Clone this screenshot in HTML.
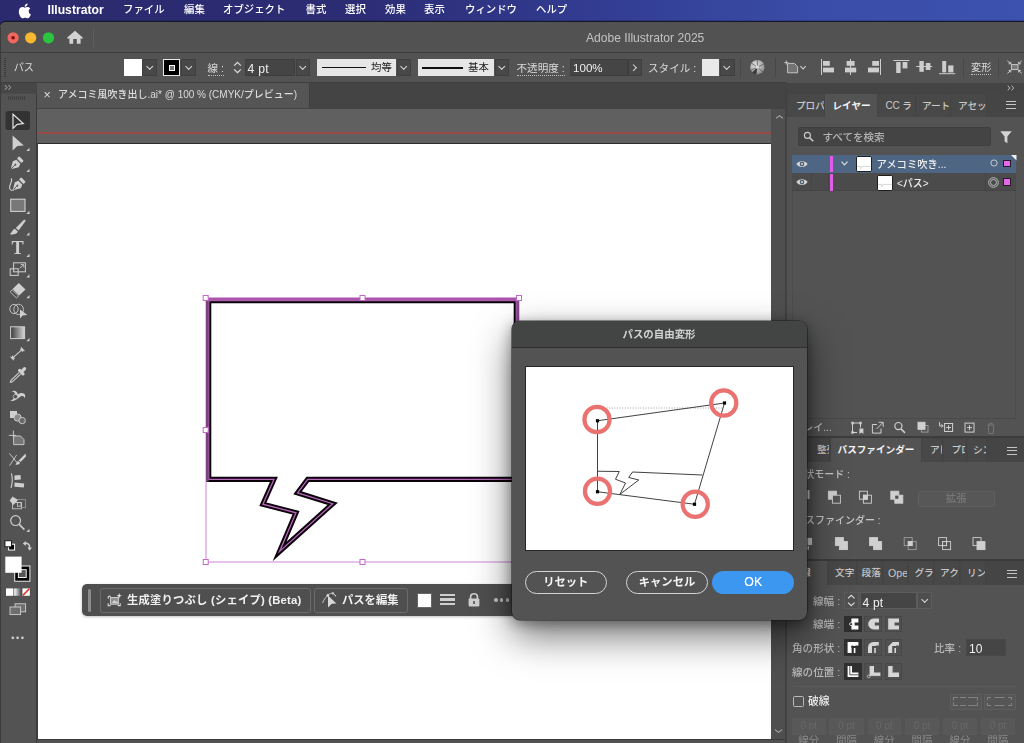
<!DOCTYPE html>
<html lang="ja">
<head>
<meta charset="utf-8">
<title>Adobe Illustrator 2025</title>
<style>
*{box-sizing:border-box;margin:0;padding:0}
html,body{width:1024px;height:743px;overflow:hidden;background:#535353}
.lbl,.t,.tab,#toolbar svg{will-change:opacity}
body{position:relative;font-family:"Liberation Sans","Noto Sans CJK JP",sans-serif;color:#e0e0e0;font-size:11px;line-height:1}
.abs{position:absolute}
.t{position:absolute;white-space:nowrap;line-height:1}
/* menubar */
#menubar{left:0;top:0;width:1024px;height:32px;background:linear-gradient(90deg,#2b2a6e 0%,#2c2c74 35%,#313a8e 55%,#3a4da8 80%,#3b52ae 100%)}
#menubar .t{color:#fff;font-size:10.4px;top:5px;font-weight:500}
/* window */
#win{left:0;top:22px;width:1024px;height:721px;background:#535353;border-top-left-radius:5.5px;overflow:hidden;box-shadow:0 -0.8px 0 0.4px #17172c}
#titlebar{left:0;top:0;width:1024px;height:31px;background:#525252;border-bottom:1px solid #3c3c3c}
#ctrl{left:0;top:31px;width:1024px;height:30px;background:#535353;border-bottom:1px solid #3e3e3e}
#tabbar{left:37px;top:61px;width:749px;height:25.5px;background:#444}
#doc-tab{left:0;top:0;width:273px;height:25.5px;background:#555555;border-right:1px solid #3e3e3e}
#toolbar{left:0;top:61px;width:37px;height:660px;background:#535353;border-right:1px solid #3a3a3a}
#paste{left:37px;top:86.5px;width:734px;height:635px;background:#606060}
#art{left:0;top:34px;width:734px;height:596.5px;background:#fff;border-top:1px solid #2e2e2e;border-left:1px solid #3c3c3c}
#bleed{left:0;top:23.6px;width:734px;height:1.8px;background:#9b4947}
#vscroll{left:771px;top:86.5px;width:15px;height:635px;background:#4f4f4f}
#dock{left:787px;top:60px;width:237px;height:661px;background:#535353}

/* generic */
.fld{position:absolute;background:#454545;border:1px solid #3d3d3d;border-radius:1px}
.dd{position:absolute;background:#484848;border:1px solid #3f3f3f}
.dd::after,.chev::after{content:"";position:absolute;left:50%;top:50%;width:4.4px;height:4.4px;margin:-3.6px 0 0 -2.6px;border-right:1.2px solid #d8d8d8;border-bottom:1.2px solid #d8d8d8;transform:rotate(45deg)}
.dd.r::after{transform:rotate(-45deg);margin:-2.6px 0 0 -3.8px}
.lbl{position:absolute;white-space:nowrap;line-height:1;color:#dadada;font-size:10.6px}
.dot-u{border-bottom:1px dotted #bdbdbd;padding-bottom:1px}
.vsep{position:absolute;width:1px;background:#474747}
svg{position:absolute;overflow:visible}

#dock .pg{position:absolute;left:-787px;top:-82px;width:1024px;height:743px}
.tabrow{position:absolute;left:787px;width:237px;background:#454545}
.tab{position:absolute;overflow:hidden;white-space:nowrap;font-size:9.6px;font-weight:500;color:#c9c9c9;background:#484848;line-height:1;border-right:1px solid #434343}
.tab.act{background:#535353;color:#f4f4f4;font-weight:700;border-right:none}
.ham{position:absolute;width:10px;height:8px;border-top:1.2px solid #c6c6c6;border-bottom:1.2px solid #c6c6c6}
.ham::after{content:"";position:absolute;left:0;top:2.1px;width:10px;height:1.2px;background:#c6c6c6}
.ibtn{position:absolute;width:17.5px;height:16.5px;border:1px solid #484848;background:#505050}
.ibtn.on{background:#2f2f2f;border-color:#2f2f2f}
</style>
</head>
<body>
<div id="menubar" class="abs">
  <svg style="left:17.5px;top:2.5px" width="13" height="15.5" viewBox="0 0 26 31"><path d="M21.4 16.4 c0-3.6 3-5.3 3.100-5.400 c-1.700-2.500-4.300-2.800-5.300-2.800 c-2.200-0.200-4.400 1.300-5.500 1.300 c-1.200 0-2.900-1.300-4.800-1.300 C6.400 8.300 4.100 9.700 2.800 11.900 c-2.600 4.600-0.700 11.300 1.900 15 c1.300 1.800 2.700 3.800 4.700 3.800 c1.900-0.100 2.600-1.200 4.900-1.200 c2.200 0 2.900 1.200 4.900 1.200 c2 0 3.300-1.800 4.500-3.700 c1.400-2.100 2-4.100 2-4.200 C25.700 22.700 21.400 21.100 21.400 16.400 Z M17.700 5.600 c1-1.200 1.700-3 1.500-4.700 c-1.500 0.100-3.300 1-4.300 2.200 c-0.900 1.100-1.800 2.800-1.500 4.500 C15 7.700 16.700 6.800 17.700 5.600 Z" fill="#fff"/></svg>

  <span class="t" style="left:47.5px;font-weight:bold;font-size:12.2px;top:4px">Illustrator</span>
  <span class="t" style="left:123px">ファイル</span>
  <span class="t" style="left:184px">編集</span>
  <span class="t" style="left:223px">オブジェクト</span>
  <span class="t" style="left:305.5px">書式</span>
  <span class="t" style="left:345px">選択</span>
  <span class="t" style="left:385px">効果</span>
  <span class="t" style="left:424px">表示</span>
  <span class="t" style="left:465px">ウィンドウ</span>
  <span class="t" style="left:536px">ヘルプ</span>
</div>
<div id="win" class="abs">
  <div id="titlebar" class="abs">
    <svg style="left:0;top:0" width="60" height="31" viewBox="0 22 60 31"><circle cx="13.1" cy="37.8" r="5.6" fill="#f1665f"/><circle cx="13.1" cy="37.8" r="1.8" fill="#7d0d0c"/><circle cx="30.7" cy="37.8" r="5.6" fill="#f8b830"/><circle cx="48.5" cy="37.8" r="5.6" fill="#2bc43e"/></svg>
    <svg style="left:66px;top:8.2px" width="18" height="14.8" viewBox="0 0 18 14" preserveAspectRatio="none"><path d="M9 0.6 L17 7.4 L15.9 8.6 L14.6 7.5 V13 H10.8 V8.6 H7.2 V13 H3.4 V7.5 L2.1 8.6 L1 7.4 Z" fill="#d2d2d2"/></svg>
    <div class="vsep" style="left:93px;top:6px;height:19px;background:#5d5d5d"></div>

    <span class="t" style="left:586px;top:9.8px;font-size:12.1px;color:#c2c2c2">Adobe Illustrator 2025</span>
  </div>
  <div id="ctrl" class="abs">
    <svg style="left:4px;top:5px" width="3" height="19" viewBox="0 0 3 19"><g fill="#3a3a3a"><rect x="0" y="0" width="2" height="1"/><rect x="0" y="2" width="2" height="1"/><rect x="0" y="4" width="2" height="1"/><rect x="0" y="6" width="2" height="1"/><rect x="0" y="8" width="2" height="1"/><rect x="0" y="10" width="2" height="1"/><rect x="0" y="12" width="2" height="1"/><rect x="0" y="14" width="2" height="1"/><rect x="0" y="16" width="2" height="1"/><rect x="0" y="18" width="2" height="1"/></g></svg>
    <span class="lbl" style="left:13.7px;top:10.3px;font-size:10.1px">パス</span>
    <div class="abs" style="left:124px;top:6px;width:17.5px;height:17px;background:#fff"></div>
    <div class="dd" style="left:142px;top:6px;width:15px;height:17px"></div>
    <div class="abs" style="left:163px;top:6px;width:17px;height:17px;background:#000;border:1px solid #e8e8e8"></div>
    <div class="abs" style="left:168.5px;top:11.5px;width:6px;height:6px;border:1.2px solid #fff;background:#777"></div>
    <div class="dd" style="left:181px;top:6px;width:15px;height:17px"></div>
    <span class="lbl dot-u" style="left:207.5px;top:10px">線 :</span>
    <svg style="left:231px;top:6px" width="13" height="17" viewBox="0 0 13 17"><path d="M3.2 6.6 L6.5 3.4 L9.8 6.6 M3.2 10.4 L6.5 13.6 L9.8 10.4" fill="none" stroke="#dcdcdc" stroke-width="1.3"/></svg>
    <div class="fld" style="left:245px;top:6px;width:50px;height:17px"></div>
    <span class="lbl" style="left:247.5px;top:10.2px;font-size:12.2px;letter-spacing:.25px;color:#efefef">4 pt</span>
    <div class="dd" style="left:295.5px;top:6px;width:14px;height:17px"></div>
    <div class="abs" style="left:317px;top:6px;width:78.5px;height:17px;background:#e6e6e6"></div>
    <div class="abs" style="left:322px;top:14.2px;width:44px;height:1.2px;background:#111"></div>
    <span class="lbl" style="left:371px;top:10.3px;color:#222;font-size:10.4px">均等</span>
    <div class="dd" style="left:396.5px;top:6px;width:14px;height:17px"></div>
    <div class="abs" style="left:417.5px;top:6px;width:76px;height:17px;background:#e6e6e6"></div>
    <div class="abs" style="left:422px;top:13.5px;width:41px;height:2.2px;background:#111"></div>
    <span class="lbl" style="left:468px;top:10.3px;color:#222;font-size:10.4px">基本</span>
    <div class="dd" style="left:494.5px;top:6px;width:14px;height:17px"></div>
    <span class="lbl dot-u" style="left:516.5px;top:10px">不透明度 :</span>
    <div class="fld" style="left:570px;top:6px;width:58px;height:17px"></div>
    <span class="lbl" style="left:573px;top:9.2px;font-size:11.6px;color:#efefef">100%</span>
    <div class="dd r" style="left:628px;top:6px;width:14px;height:17px"></div>
    <span class="lbl" style="left:648px;top:10px">スタイル :</span>
    <div class="abs" style="left:701.5px;top:6px;width:17px;height:17px;background:#e9e9e9"></div>
    <div class="dd" style="left:719.5px;top:6px;width:15px;height:17px"></div>
    <div class="vsep" style="left:740px;top:5px;height:19px"></div>
    <div class="vsep" style="left:775px;top:5px;height:19px"></div>
    <div class="vsep" style="left:963px;top:5px;height:19px"></div>
    <div class="vsep" style="left:998px;top:5px;height:19px"></div>
    <span class="lbl dot-u" style="left:971px;top:10px;font-size:10.2px">変形</span>
    <svg style="left:740px;top:0" width="284" height="29" viewBox="740 53 284 29">
      <defs><radialGradient id="glb" cx="0.4" cy="0.35" r="0.8"><stop offset="0" stop-color="#e2e2e2"/><stop offset="0.6" stop-color="#a8a8a8"/><stop offset="1" stop-color="#6c6c6c"/></radialGradient></defs>
      <circle cx="757.4" cy="67.2" r="7.2" fill="url(#glb)"/>
      <g stroke="#5a5a5a" stroke-width="0.8" fill="none"><path d="M757.4 67.2 L757.4 60 M757.4 67.2 L763.8 64 M757.4 67.2 L763 72 M757.4 67.2 L756 74.2 M757.4 67.2 L750.6 70.4 M757.4 67.2 L751.4 63"/></g>
      <path d="M757.4 67.2 L752 72.6 A7.2 7.2 0 0 0 756 74.3 Z" fill="#3a3a3a"/>
      <circle cx="757.4" cy="67.2" r="1.6" fill="#dedede"/>
      <g fill="none" stroke="#cdcdcd" stroke-width="0.9">
        <path d="M786.3 60.6 V64.6 M784.3 62.6 H788.3"/>
        <path d="M787.6 63.4 H794.4 L797.6 66.6 V72.8 H787.6 Z" fill="#747474"/>
        <path d="M800.4 66.2 L803.1 68.9 L805.8 66.2" stroke-width="1.1"/>
      </g>
      <g fill="#cdcdcd">
        <rect x="821" y="59" width="1" height="16"/><rect x="823" y="61" width="6.8" height="4.8"/><rect x="823" y="67.6" width="11" height="4.8"/>
        <rect x="850" y="59" width="1" height="16"/><rect x="846.6" y="61" width="8" height="4.8"/><rect x="845" y="67.6" width="11.2" height="4.8"/>
        <rect x="880" y="59" width="1" height="16"/><rect x="872.2" y="61" width="6.8" height="4.8"/><rect x="868" y="67.6" width="11" height="4.8"/>
        <rect x="893.4" y="60" width="16" height="1"/><rect x="896.2" y="62" width="4.4" height="11"/><rect x="902.6" y="62" width="4.8" height="6.4"/>
        <rect x="916.2" y="66" width="16" height="1"/><rect x="919.4" y="61" width="4.4" height="10.8"/><rect x="925.8" y="63" width="4.6" height="7"/>
        <rect x="939" y="73.2" width="16.2" height="1"/><rect x="942.2" y="61" width="4" height="11.4"/><rect x="948.2" y="65.4" width="5.2" height="7"/>
      </g>
      <rect x="1011.4" y="64.6" width="6.6" height="5" fill="#7a7a7a" stroke="#cdcdcd" stroke-width="0.9"/>
      <g fill="none" stroke="#cdcdcd" stroke-width="1"><path d="M1007.4 60.8 L1010.6 63.6 M1021.8 60.8 L1018.8 63.6 M1007.4 73.4 L1010.6 70.6 M1021.8 73.4 L1018.8 70.6"/><path d="M1008.6 63.8 H1010.8 V61.8 M1020.8 63.8 H1018.6 V61.8 M1008.6 70.4 H1010.8 V72.4 M1020.8 70.4 H1018.6 V72.4"/></g>
    </svg>

</div>
  <div id="tabbar" class="abs">
    <div class="abs" style="left:0;bottom:0;width:749px;height:1px;background:#434343;z-index:2"></div><div id="doc-tab" class="abs"><span class="lbl" style="left:6.5px;top:6px;font-size:12.5px;color:#dedede">×</span>
      <span class="lbl" style="left:21px;top:7.2px;font-size:10px;font-weight:500;color:#dcdcdc">アメコミ風吹き出し.ai* @ 100 % (CMYK/プレビュー)</span></div>
  </div>
  <div class="abs" style="left:0;top:5px;width:1px;height:716px;background:#3b3b3b;z-index:3"></div>
  <div id="toolbar" class="abs"><svg style="left:0;top:-1px" width="37" height="661" viewBox="0 82 37 661">
<rect x="0" y="83" width="37" height="10.5" fill="#474747"/>
<path d="M5 85.2 L7 87.5 L5 89.8 M8.6 85.2 L10.6 87.5 L8.6 89.8" fill="none" stroke="#bdbdbd" stroke-width="0.9"/>
<g fill="#3b3b3b"><rect x="8" y="96.5" width="1" height="3"/><rect x="10" y="96.5" width="1" height="3"/><rect x="12" y="96.5" width="1" height="3"/><rect x="14" y="96.5" width="1" height="3"/><rect x="16" y="96.5" width="1" height="3"/><rect x="18" y="96.5" width="1" height="3"/><rect x="20" y="96.5" width="1" height="3"/><rect x="22" y="96.5" width="1" height="3"/><rect x="24" y="96.5" width="1" height="3"/></g>
<!-- selection -->
<rect x="5.5" y="111" width="24.5" height="19" rx="2.5" fill="#333"/>
<path d="M13 114.3 L23.3 123.6 L17.2 124.4 L13 128.4 Z" fill="none" stroke="#e6e6e6" stroke-width="1.2" stroke-linejoin="miter"/>
<!-- direct selection -->
<path d="M12.6 135.6 L23.8 145.4 L17.4 146 L12.6 150.4 Z" fill="#cfcfcf"/>
<path d="M29.5 147.8 V151 H26.3 Z" fill="#cfcfcf"/>
<!-- pen -->
<g transform="translate(16.5,163.5) rotate(45)" fill="#cfcfcf"><path d="M0 8.2 L-4.2 1 L-2.8 -2.6 H2.8 L4.2 1 Z"/><rect x="-3.2" y="-7" width="6.4" height="3.2" rx="0.8"/><path d="M0 8.2 V2.4" stroke="#535353" stroke-width="0.9"/><circle cx="0" cy="1.6" r="1" fill="#535353"/></g>
<path d="M29.5 168.8 V172 H26.3 Z" fill="#cfcfcf"/>
<!-- curvature -->
<g transform="translate(18.5,184.5) rotate(45)" fill="#cfcfcf"><path d="M0 8.2 L-4.2 1 L-2.8 -2.6 H2.8 L4.2 1 Z"/><rect x="-3.2" y="-7" width="6.4" height="3.2" rx="0.8"/><path d="M0 8.2 V2.4" stroke="#535353" stroke-width="0.9"/><circle cx="0" cy="1.6" r="1" fill="#535353"/></g>
<path d="M11 178.5 C13.5 181 9 184 9.6 188 C10 190.6 12.5 190.8 14 189.6" fill="none" stroke="#cfcfcf" stroke-width="1.1"/>
<!-- rectangle -->
<rect x="10.7" y="199.2" width="14.3" height="12.2" fill="#787878" stroke="#cfcfcf" stroke-width="1.1"/>
<path d="M29.5 210.8 V214 H26.3 Z" fill="#cfcfcf"/>
<!-- brush -->
<path d="M24.2 219.4 L25.8 220.8 L18.6 230.4 L15.8 228 Z" fill="#cfcfcf"/>
<path d="M14.8 228.8 L17.8 231.4 C17 234.2 13 234.8 9.8 234.2 C12.2 232.8 12.2 229.6 14.8 228.8 Z" fill="#cfcfcf"/>
<path d="M29.5 232.3 V235.5 H26.3 Z" fill="#cfcfcf"/>
<!-- type -->
<text x="17.6" y="254.3" text-anchor="middle" font-family="Liberation Serif,serif" font-weight="bold" font-size="18.4" fill="#cfcfcf">T</text>
<path d="M29.5 253.8 V257 H26.3 Z" fill="#cfcfcf"/>
<!-- scale -->
<rect x="13.6" y="262.8" width="11.8" height="9" fill="none" stroke="#cfcfcf" stroke-width="1"/>
<rect x="10.2" y="268.8" width="8" height="6.6" fill="none" stroke="#cfcfcf" stroke-width="1"/>
<path d="M19.6 268.4 L23.4 265 M20.8 264.6 H23.8 V267.6" fill="none" stroke="#cfcfcf" stroke-width="0.9"/>
<path d="M29.5 274.3 V277.5 H26.3 Z" fill="#cfcfcf"/>
<!-- eraser -->
<path d="M18.8 283 L25.5 289.4 L19.2 295.4 L12.6 289 Z" fill="#cfcfcf"/>
<path d="M12.2 289.8 L18.6 296 L16.4 297.8 L10.2 291.8 Z" fill="#4a4a4a" stroke="#cfcfcf" stroke-width="0.9"/>
<path d="M29.5 295.1 V298.3 H26.3 Z" fill="#cfcfcf"/>
<!-- shape builder -->
<ellipse cx="14" cy="309" rx="4.2" ry="4.6" fill="none" stroke="#cfcfcf" stroke-width="0.9"/>
<ellipse cx="18.6" cy="309.4" rx="4.8" ry="5.2" fill="none" stroke="#cfcfcf" stroke-width="0.9"/>
<path d="M20 309.4 L27.4 315 L22.6 315.4 L20 318.4 Z" fill="#cfcfcf"/>
<!-- gradient -->
<defs><linearGradient id="gg" x1="0" x2="1" y1="0" y2="0"><stop offset="0" stop-color="#3a3a3a"/><stop offset="1" stop-color="#d8d8d8"/></linearGradient>
<linearGradient id="gg2" x1="0" x2="1" y1="0" y2="0"><stop offset="0" stop-color="#fff"/><stop offset="1" stop-color="#444"/></linearGradient></defs>
<rect x="10.6" y="326.8" width="14" height="11.8" fill="url(#gg)" stroke="#cfcfcf" stroke-width="1"/>
<path d="M29.5 338.0 V341.2 H26.3 Z" fill="#cfcfcf"/>
<!-- measure -->
<path d="M12.4 358.2 L22.6 349.2 M10.6 356.6 L13.8 360.2 M21 347.4 L24.4 351.2 M12.6 355.6 L12.4 358.2 L15 358.2 M20 349.2 L22.6 349.2 L22.4 351.8" fill="none" stroke="#cfcfcf" stroke-width="1.1"/>
<!-- eyedropper -->
<path d="M19.6 370.4 L23 373.8 M21.2 372.2 L24.6 368.6" stroke="#cfcfcf" stroke-width="3.2" stroke-linecap="round"/>
<path d="M19 372.6 L11 380.4 L10.4 382.2 L12.4 381.8 L20.6 374.2" fill="none" stroke="#cfcfcf" stroke-width="1.1"/>
<!-- width/warp -->
<path d="M10.4 401 C13 399.4 15.4 397.6 15.2 394.6 C15 392.4 13 391.4 11.6 391.6 C14 389.6 17.6 391.2 17.8 394.4 C19.2 393 22.4 392.4 24 393.6 C25.6 394.8 25.4 397.4 24.8 398.4 C24.4 396.4 22.6 395.6 20.6 396.4 C18.4 397.4 17.6 399.4 14.4 400.4 C12.8 400.9 11.4 401.2 10.4 401 Z" fill="#cfcfcf"/>
<circle cx="15.4" cy="396.6" r="2.2" fill="#535353" stroke="#cfcfcf" stroke-width="0.7"/>
<!-- blend -->
<rect x="10" y="411" width="7" height="7" fill="#cfcfcf"/>
<circle cx="17.6" cy="417.6" r="3.6" fill="#8a8a8a" stroke="#cfcfcf" stroke-width="0.9"/>
<circle cx="22.2" cy="420.6" r="3.2" fill="#6a6a6a" stroke="#cfcfcf" stroke-width="0.9"/>
<!-- artboard -->
<path d="M13.4 430.6 V438 M8.8 435.4 H16" stroke="#cfcfcf" stroke-width="0.9" fill="none"/>
<path d="M13.6 436 H20.6 L24 439.6 V444.6 H13.6 Z" fill="#767676" stroke="#cfcfcf" stroke-width="0.9"/>
<!-- slice -->
<path d="M9.4 453.4 L17 462.6 M9.6 465.6 L16.6 455" stroke="#cfcfcf" stroke-width="0.9" fill="none"/>
<path d="M25.6 453.6 L26 456.6 L20.6 462 L18.6 460.4 Z" fill="#cfcfcf"/>
<path d="M18 461 L20 462.8 C19.4 464.8 17 465 15.4 464.4 C16.6 463.6 16.6 461.6 18 461 Z" fill="#cfcfcf"/>
<!-- align/perspective -->
<path d="M11.4 473.4 C12.6 478 12.6 483 11 488" fill="none" stroke="#cfcfcf" stroke-width="1.1"/>
<path d="M14.4 475.6 L20.6 475 L20.8 479.6 L14.6 480 Z M14.6 482.6 L24.2 483.4 L23.8 487.6 L14.4 486.8 Z" fill="#cfcfcf"/>
<!-- live paint -->
<rect x="16.4" y="499.6" width="9" height="8" fill="none" stroke="#9a9a9a" stroke-width="0.8"/>
<rect x="12.4" y="502.4" width="9" height="6.4" fill="#535353" stroke="#cfcfcf" stroke-width="0.8"/>
<rect x="17.4" y="502.6" width="3.6" height="3.6" fill="none" stroke="#cfcfcf" stroke-width="0.8"/>
<path d="M12.6 496.6 L18 500 L13.4 505 L9.6 500.6 Z" fill="#cfcfcf"/>
<!-- zoom -->
<circle cx="15.6" cy="520.6" r="4.9" fill="none" stroke="#cfcfcf" stroke-width="1.2"/>
<path d="M19.2 524.4 L24.4 529.6" stroke="#cfcfcf" stroke-width="1.5"/>
<path d="M29.5 528.8 V532 H26.3 Z" fill="#cfcfcf"/>
<!-- default fill/stroke -->
<rect x="8.6" y="544.2" width="6" height="5.8" fill="#000" stroke="#fff" stroke-width="1"/>
<rect x="5" y="540.8" width="6.4" height="6" fill="#fff" stroke="#000" stroke-width="0.8"/>
<path d="M24.6 543.4 C27.6 542.6 30 544.6 29.6 548" fill="none" stroke="#cfcfcf" stroke-width="1.5"/>
<path d="M22.8 543.6 L25.8 541 L25.8 546 Z M27.4 547.4 L32 547.4 L29.6 550.8 Z" fill="#cfcfcf"/>
<!-- stroke swatch -->
<rect x="14.7" y="566" width="15.2" height="15.2" fill="#000" stroke="#f0f0f0" stroke-width="1"/>
<rect x="18.4" y="569.7" width="7.8" height="7.8" fill="#555" stroke="#f0f0f0" stroke-width="1"/>
<!-- fill swatch -->
<rect x="5.3" y="556.6" width="16.3" height="16.2" fill="#fff"/>
<!-- color modes -->
<rect x="6" y="588.4" width="7.4" height="7.4" fill="#fff"/>
<rect x="14.2" y="588.4" width="7.4" height="7.4" fill="url(#gg2)"/>
<rect x="22.4" y="588.4" width="7.4" height="7.4" fill="#fff"/>
<path d="M22.8 595.4 L29.4 588.8" stroke="#e0302a" stroke-width="1.6"/>
<!-- screen mode -->
<rect x="15" y="603.8" width="10.6" height="8" fill="#6e6e6e" stroke="#cfcfcf" stroke-width="0.9"/>
<rect x="10" y="607" width="10.6" height="7.6" fill="#6e6e6e" stroke="#cfcfcf" stroke-width="0.9"/>
<!-- more -->
<circle cx="12.8" cy="637.8" r="1.35" fill="#cfcfcf"/><circle cx="17.6" cy="637.8" r="1.35" fill="#cfcfcf"/><circle cx="22.4" cy="637.8" r="1.35" fill="#cfcfcf"/>
</svg></div>
  <div id="paste" class="abs">
    <div id="bleed" class="abs"></div>
    <div id="art" class="abs"></div>
  </div>
  <div id="vscroll" class="abs"></div>
  <svg style="left:774.5px;top:92px" width="9" height="6" viewBox="0 0 9 6"><path d="M1 4.4 L4.5 1.6 L8 4.4" fill="none" stroke="#a9a9a9" stroke-width="1.1"/></svg>
  <svg style="left:773.5px;top:705.5px" width="9" height="6" viewBox="0 0 9 6"><path d="M1 1.6 L4.5 4.4 L8 1.6" fill="none" stroke="#a9a9a9" stroke-width="1.1"/></svg>
  <div class="abs" style="left:37px;top:716.5px;width:749px;height:4.5px;background:#515151;border-top:1px solid #3a3a3a"></div>

  <div id="dock" class="abs"><div class="pg">
  <div class="abs" style="left:785px;top:82px;width:2px;height:661px;background:#424242"></div>
  <div class="abs" style="left:787px;top:83px;width:237px;height:10.5px;background:#444"></div>
  <svg style="left:1007px;top:84.5px" width="8" height="6" viewBox="0 0 8 6"><path d="M0.8 0.6 L2.8 3 L0.8 5.4 M4.6 0.6 L6.6 3 L4.6 5.4" fill="none" stroke="#c4c4c4" stroke-width="0.9"/></svg>
  <div class="tabrow" style="top:93.5px;height:23.5px"></div>
  <div class="tab" style="left:788px;top:94px;width:36.5px;height:23px;padding:6.5px 0 0 8px">プロパティ</div>
  <div class="tab act" style="left:825px;top:93.5px;width:52px;height:24.0px;padding:7px 0 0 7.5px">レイヤー</div>
  <div class="tab" style="left:877.5px;top:94px;width:38.0px;height:23px;padding:7.2px 0 0 8px;font-size:10px;letter-spacing:-.2px">CC <span style="font-size:9.6px;letter-spacing:0">ラ</span></div>
  <div class="tab" style="left:916px;top:94px;width:34.5px;height:23px;padding:6.5px 0 0 6px">アートボード</div>
  <div class="tab" style="left:951px;top:94px;width:35.5px;height:23px;padding:6.5px 0 0 7px">アセット</div>
  <div class="ham" style="left:1006px;top:101px"></div>
  <!-- search -->
  <div class="abs" style="left:798px;top:127px;width:192.5px;height:19px;background:#444;border:1px solid #3f3f3f;border-radius:2px"></div>
  <svg style="left:802.5px;top:130.5px" width="12" height="12" viewBox="0 0 12 12"><circle cx="4.4" cy="4.4" r="3" fill="none" stroke="#cdcdcd" stroke-width="1.1"/><path d="M6.7 6.7 L10.2 10.2" stroke="#cdcdcd" stroke-width="1.5"/></svg>
  <span class="lbl" style="left:822.5px;top:131.5px;font-size:10.6px;font-weight:500;color:#b4b4b4">すべてを検索</span>
  <svg style="left:999.5px;top:130.5px" width="12" height="13" viewBox="0 0 12 13"><path d="M0.3 0.3 H11.7 L7.4 5.6 V12.2 L4.6 10.4 V5.6 Z" fill="#d4d4d4"/></svg>
  <!-- list area -->
  <div class="abs" style="left:792px;top:154.5px;width:224px;height:264px;border-left:1px solid #4c4c4c;border-right:1px solid #4c4c4c;border-bottom:1px solid #494949"></div>
  <div class="abs" style="left:792px;top:154.7px;width:224px;height:18px;background:#4e6683"></div>
  <div class="abs" style="left:792px;top:173.2px;width:224px;height:18px;background:#4b4b4b;border-bottom:1px solid #444"></div>
  <div class="abs" style="left:811px;top:173.2px;width:1px;height:18px;background:#454545"></div>
  <div class="abs" style="left:828px;top:173.2px;width:1px;height:18px;background:#454545"></div>
  <div class="abs" style="left:984.5px;top:173.2px;width:1px;height:18px;background:#454545"></div>
  <svg style="left:795.5px;top:159.5px" width="12" height="8" viewBox="0 0 12 8"><path d="M0.4 4 C2.6 0.2 9.4 0.2 11.6 4 C9.4 7.8 2.6 7.8 0.4 4 Z" fill="#d6d6d6"/><circle cx="6" cy="4" r="2.3" fill="#4b5a6c"/><circle cx="6" cy="4" r="1.1" fill="#d6d6d6"/></svg><svg style="left:795.5px;top:178px" width="12" height="8" viewBox="0 0 12 8"><path d="M0.4 4 C2.6 0.2 9.4 0.2 11.6 4 C9.4 7.8 2.6 7.8 0.4 4 Z" fill="#d6d6d6"/><circle cx="6" cy="4" r="2.3" fill="#4b5a6c"/><circle cx="6" cy="4" r="1.1" fill="#d6d6d6"/></svg>
  <div class="abs" style="left:830.3px;top:155.5px;width:3.2px;height:16.5px;background:#e05be6"></div>
  <div class="abs" style="left:830.3px;top:174px;width:3.2px;height:16.5px;background:#e05be6"></div>
  <svg style="left:841px;top:160.5px" width="7" height="5" viewBox="0 0 7 5"><path d="M0.5 0.7 L3.5 3.9 L6.5 0.7" fill="none" stroke="#dcdcdc" stroke-width="1.2"/></svg>
  <div class="abs" style="left:856px;top:155.8px;width:16.3px;height:16.3px;background:#fff;border:1px solid #1e1e1e;border-radius:1.8px"></div><svg style="left:857px;top:164px" width="14.3" height="6" viewBox="0 0 14.3 6"><path d="M0 2.4 H3.2 L3.8 3.8 L3.4 4.8 L5 2.4 H14.3" fill="none" stroke="#b9b9b9" stroke-width="0.6"/></svg>
  <span class="lbl" style="left:876.5px;top:160.2px;font-size:10.3px;font-weight:500;color:#ececec">アメコミ吹き...</span>
  <svg style="left:989.7px;top:159.4px" width="8" height="8" viewBox="0 0 8 8"><circle cx="4" cy="4" r="3.1" fill="none" stroke="#d2d2d2" stroke-width="0.9"/></svg>
  <div class="abs" style="left:1003px;top:159.8px;width:7.5px;height:7.5px;background:#e468ea;border:1px solid #2a1a2a"></div>
  <svg style="left:1010.5px;top:154.7px" width="5.5" height="5.5" viewBox="0 0 5.5 5.5"><path d="M0 0 H5.5 V5.5 Z" fill="#f0f0f0"/></svg>
  <div class="abs" style="left:876.6px;top:174.5px;width:16.2px;height:16.2px;background:#fff;border:1px solid #1e1e1e;border-radius:1.8px"></div><svg style="left:877.6px;top:182px" width="14.2" height="6" viewBox="0 0 14.2 6"><path d="M0 2.4 H3.2 L3.8 3.8 L3.4 4.8 L5 2.4 H14.2" fill="none" stroke="#b9b9b9" stroke-width="0.6"/></svg>
  <span class="lbl" style="left:897px;top:179.3px;font-size:10px;font-weight:500;color:#ececec">&lt;パス&gt;</span>
  <svg style="left:988.2px;top:176.6px" width="11" height="11" viewBox="0 0 11 11"><circle cx="5.5" cy="5.5" r="4.8" fill="none" stroke="#c8c8c8" stroke-width="0.9"/><circle cx="5.5" cy="5.5" r="3" fill="none" stroke="#c8c8c8" stroke-width="0.9"/></svg>
  <div class="abs" style="left:1003px;top:178.2px;width:7.5px;height:7.5px;background:#e468ea;border:1px solid #2a1a2a"></div>
  <!-- layers footer -->
  <span class="lbl" style="left:795px;top:422.5px;font-size:10px;font-weight:500;color:#c6c6c6">1 レイ...</span>
  <svg style="left:850px;top:419.5px" width="150" height="16" viewBox="850 419.5 150 16">
    <g fill="none" stroke="#d0d0d0" stroke-width="1">
      <path d="M852.5 422.5 H860.5 M852.5 432 H857 M852.5 422.5 V432 M860.5 422.5 V427"/>
      <path d="M851.3 421.3 h2.4 v2.4 h-2.4 Z M859.3 421.3 h2.4 v2.4 h-2.4 Z M851.3 430.8 h2.4 v2.4 h-2.4 Z" fill="#d0d0d0" stroke="none"/>
      <path d="M859.4 428 h4 v5.6 l-2 -1.6 l-2 1.6 Z" fill="#d0d0d0" stroke="none"/>
      <path d="M877 424 H872.4 V432.6 H881 V428 M876.6 428.4 L882.6 422.4 M878.6 421.8 H883.2 V426.4"/>
      <circle cx="898.4" cy="425.6" r="3.6" stroke-width="1.2"/><path d="M901 428.4 L905 432.4" stroke-width="1.5"/>
      <rect x="921.4" y="425" width="6.6" height="6.6" stroke="#9a9a9a"/><rect x="918" y="421.8" width="7" height="7" fill="#d0d0d0"/>
      <path d="M939.6 421.6 V425.4 H943 M941.4 423.8 L943.2 425.4 L941.4 427"/>
      <rect x="944.6" y="423" width="8" height="8"/><path d="M948.6 424.6 V429.4 M946.2 427 H951"/>
      <rect x="965" y="422.6" width="9" height="9"/><path d="M969.5 424.6 V429.6 M967 427.1 H972"/>
      <path d="M987.6 424.6 H994.4 M989.6 424.4 V422.8 H992.4 V424.4 M988.2 425 L988.8 433 H993.2 L993.8 425" stroke="#777"/>
    </g>
  </svg>
  <!-- pathfinder panel -->
  <div class="abs" style="left:787px;top:436px;width:237px;height:1.5px;background:#3c3c3c"></div>
  <div class="tabrow" style="top:437.5px;height:24.5px"></div>
  <div class="tab" style="left:788px;top:438.5px;width:20px;height:23.5px;padding:6.5px 0 0 8px">変形</div>
  <div class="tab" style="left:808.7px;top:438.5px;width:21.299999999999955px;height:23.5px;padding:6.5px 0 0 8.3px">整列</div>
  <div class="tab act" style="left:830.6px;top:438px;width:90.79999999999995px;height:24.5px;padding:7px 0 0 7px">パスファインダー</div>
  <div class="tab" style="left:922px;top:438.5px;width:21.299999999999955px;height:23.5px;padding:6.5px 0 0 8px">アピアランス</div>
  <div class="tab" style="left:944px;top:438.5px;width:20.6px;height:23.5px;padding:6.5px 0 0 7.5px;border-right:none">プロパティ</div><div class="tab" style="left:964.6px;top:438.5px;width:2.7px;height:23.5px"></div>
  <div class="tab" style="left:968px;top:438.5px;width:19px;height:23.5px;padding:6.5px 0 0 5px">シンボル</div>
  <div class="ham" style="left:1006.5px;top:446.5px"></div>
  <span class="lbl" style="left:794.2px;top:470px;font-size:10px;font-weight:500;color:#c6c6c6">形状モード :</span>
  <div class="abs" style="left:918px;top:491px;width:76.5px;height:15.5px;background:#575757;border:1px solid #5e5e5e;border-radius:2px"></div>
  <span class="lbl" style="left:918px;width:76.5px;text-align:center;top:493.5px;font-size:10.4px;color:#7e7e7e">拡張</span>
  <span class="lbl" style="left:795px;top:516px;font-size:10px;font-weight:500;color:#c6c6c6">パスファインダー :</span>
  <svg style="left:800px;top:488px" width="200" height="66" viewBox="800 488 200 66">
    <g stroke="#d0d0d0" stroke-width="0.9">
      <!-- shape modes -->
      <rect x="797" y="494.5" width="8" height="8" fill="#d0d0d0"/><rect x="801" y="490.5" width="8" height="8" fill="#d0d0d0"/>
      <rect x="828.4" y="491.2" width="8" height="8" fill="#d0d0d0"/><rect x="832.4" y="495.2" width="8" height="8" fill="#535353"/>
      <rect x="859.4" y="491.2" width="8" height="8" fill="none"/><rect x="863.4" y="495.2" width="8" height="8" fill="none"/><rect x="863.4" y="495.2" width="4" height="4" fill="#d0d0d0"/>
      <rect x="890.8" y="491.2" width="8" height="8" fill="#d0d0d0"/><rect x="894.8" y="495.2" width="8" height="8" fill="#d0d0d0"/><rect x="895.2" y="495.6" width="3.2" height="3.2" fill="#535353" stroke="none"/>
      <!-- pathfinders -->
      <rect x="800.4" y="541.4" width="8" height="8" fill="#d0d0d0"/><rect x="804.4" y="537.4" width="8" height="8" fill="#d0d0d0" stroke="#535353"/>
      <rect x="835.4" y="537.6" width="8" height="8" fill="#d0d0d0"/><rect x="839.4" y="541.6" width="8" height="8" fill="#d0d0d0"/>
      <rect x="869.6" y="537.6" width="8" height="8" fill="#d0d0d0"/><rect x="873.6" y="541.6" width="8" height="8" fill="#d0d0d0"/>
      <rect x="904.2" y="537.6" width="8" height="8" fill="none" stroke="#9c9c9c"/><rect x="908.2" y="541.6" width="8" height="8" fill="none" stroke="#9c9c9c"/><rect x="908.2" y="541.6" width="4" height="4" fill="#d0d0d0"/>
      <rect x="938.6" y="537.6" width="8" height="8" fill="none"/><rect x="942.6" y="541.6" width="8" height="8" fill="none"/><rect x="942.6" y="541.6" width="4" height="4" fill="none"/>
      <rect x="973" y="537.6" width="8" height="8" fill="none"/><rect x="977" y="541.6" width="8" height="8" fill="#d0d0d0"/>
    </g>
  </svg>

  <!-- stroke panel -->
  <div class="abs" style="left:787px;top:559px;width:237px;height:1.5px;background:#3c3c3c"></div>
  <div class="tabrow" style="top:560.5px;height:24.5px"></div>
  <div class="tab act" style="left:788px;top:561px;width:39px;height:24.5px;padding:7px 0 0 13px">線</div>
  <div class="tab" style="left:827.6px;top:561.5px;width:29.399999999999977px;height:23.5px;padding:6.5px 0 0 7.5px">文字</div>
  <div class="tab" style="left:857.6px;top:561.5px;width:25.399999999999977px;height:23.5px;padding:6.5px 0 0 4px">段落</div>
  <div class="tab" style="left:883.6px;top:561.5px;width:24.799999999999955px;height:23.5px;padding:6px 0 0 4.5px;font-size:10.6px">OpenType</div>
  <div class="tab" style="left:909px;top:561.5px;width:25px;height:23.5px;padding:6.5px 0 0 5.5px">グラフィック</div>
  <div class="tab" style="left:934.6px;top:561.5px;width:25.399999999999977px;height:23.5px;padding:6.5px 0 0 5.5px">アクション</div>
  <div class="tab" style="left:960.6px;top:561.5px;width:25.799999999999955px;height:23.5px;padding:6.5px 0 0 6.5px">リンク</div>
  <div class="ham" style="left:1006.5px;top:569.5px"></div>
  <span class="lbl" style="left:813px;top:596px;font-size:10.6px;font-weight:500;color:#b9b9b9">線幅 :</span>
  <div class="abs" style="left:844.2px;top:592px;width:14.5px;height:17px;border:1px solid #5c5c5c;background:#505050"></div>
  <svg style="left:844.2px;top:592px" width="14.5" height="17" viewBox="0 0 14.5 17"><path d="M4 6.4 L7.25 3.4 L10.5 6.4 M4 10.6 L7.25 13.6 L10.5 10.6" fill="none" stroke="#dcdcdc" stroke-width="1.2"/></svg>
  <div class="abs" style="left:860px;top:592px;width:56.5px;height:17px;border:1px solid #5c5c5c;background:#454545"></div>
  <span class="lbl" style="left:862.5px;top:597px;font-size:12px;letter-spacing:.2px;color:#f2f2f2">4 pt</span>
  <div class="dd" style="left:916.5px;top:592px;width:15.5px;height:17px;border-color:#5c5c5c;background:#4e4e4e"></div>
  <span class="lbl" style="left:813px;top:618.8px;font-size:10.6px;font-weight:500;color:#b9b9b9">線端 :</span>
  <div class="ibtn on" style="left:844.2px;top:615.5px"></div><div class="ibtn" style="left:864.4px;top:615.5px"></div><div class="ibtn" style="left:884.6px;top:615.5px"></div>
  <span class="lbl" style="left:792px;top:643px;font-size:10.6px;font-weight:500;color:#b9b9b9">角の形状 :</span>
  <div class="ibtn on" style="left:844.2px;top:639px"></div><div class="ibtn" style="left:864.4px;top:639px"></div><div class="ibtn" style="left:884.6px;top:639px"></div>
  <span class="lbl" style="left:934px;top:643px;font-size:10.6px;font-weight:500;color:#b9b9b9">比率 :</span>
  <div class="abs" style="left:965.5px;top:639px;width:40.5px;height:17px;border:1px solid #484848;background:#454545"></div>
  <span class="lbl" style="left:969px;top:643.2px;font-size:12px;color:#f2f2f2">10</span>
  <span class="lbl" style="left:792px;top:666.6px;font-size:10.6px;font-weight:500;color:#b9b9b9">線の位置 :</span>
  <div class="ibtn on" style="left:844.2px;top:663px"></div><div class="ibtn" style="left:864.4px;top:663px"></div><div class="ibtn" style="left:884.6px;top:663px"></div>
  <svg style="left:840px;top:612px" width="70" height="72" viewBox="840 612 70 72">
    <!-- caps -->
    <path d="M851.4 618.6 H858.4 V622.6 H854.6 V625.6 H858.4 V629.4 H851.4 Z" fill="#fff"/><circle cx="851" cy="624.1" r="1.5" fill="#2f2f2f" stroke="#fff" stroke-width="0.7"/>
    <path d="M873.6 618.6 H879 V622.6 H874.8 V625.6 H879 V629.4 H873.6 A5.4 5.4 0 0 1 873.6 618.6 Z" fill="#d6d6d6"/>
    <path d="M888.2 618.6 H899 V622.6 H894.6 V625.6 H899 V629.4 H888.2 Z" fill="#d6d6d6"/>
    <!-- corners -->
    <path d="M847.6 642 H858.4 V645.4 H855.4 V653 H847.6 Z" fill="#fff"/><path d="M851.6 646 H858.4 V648 H853.8 V653 H851.6 Z" fill="#2f2f2f"/><circle cx="852.4" cy="646.8" r="1.2" fill="#2f2f2f"/>
    <path d="M878.8 642 V645.4 H875.8 V653 H868 V647.4 A5.4 5.4 0 0 1 873.4 642 Z" fill="#d6d6d6"/><path d="M872 646 H878.8 V648 H874.2 V653 H872 Z" fill="#505050"/>
    <path d="M899 642 V645.4 H896 V653 H888.2 V646.6 L892.8 642 Z" fill="#d6d6d6"/><path d="M892.2 646 H899 V648 H894.4 V653 H892.2 Z" fill="#505050"/>
    <!-- align -->
    <path d="M847.6 666 H852 V672.6 H858.4 V677 H847.6 Z" fill="#fff"/><path d="M849.8 666 V674.8 H858.4" fill="none" stroke="#2f2f2f" stroke-width="0.8"/>
    <path d="M869.6 666 H874 V672.6 H880.4 V675.4 H869.6 Z" fill="#d6d6d6"/><path d="M869.4 675.6 H880.4" stroke="#d6d6d6" stroke-width="0.8" fill="none"/><circle cx="868.8" cy="676.4" r="1.4" fill="none" stroke="#d6d6d6" stroke-width="0.7"/>
    <path d="M888.2 666 H892.6 V672.6 H899 V677 H888.2 Z" fill="#d6d6d6"/><path d="M892.6 666 V672.6 H899" stroke="#9a9a9a" stroke-width="0.8" fill="none"/>
  </svg>
  <div class="abs" style="left:792px;top:686px;width:224px;height:1px;background:#5a5a5a"></div>
  <div class="abs" style="left:793px;top:696px;width:10.5px;height:10.5px;border:1px solid #b9b9b9;border-radius:1.5px"></div>
  <span class="lbl" style="left:808px;top:696px;font-size:10.8px;font-weight:500;color:#ececec">破線</span>
  <div class="abs" style="left:949.5px;top:693.5px;width:32px;height:16px;border:1px solid #5d5d5d;background:#565656"></div>
  <div class="abs" style="left:983.5px;top:693.5px;width:32px;height:16px;border:1px solid #5d5d5d;background:#565656"></div>
  <svg style="left:949px;top:693px" width="68" height="17" viewBox="949 693 68 17">
    <g fill="none" stroke="#828282" stroke-width="1.1">
      <path d="M953.5 700.5 V697.5 H958 M960 697.5 H966 M968 697.5 H977.5 V700.5 M953.5 702.5 V705.5 H958 M960 705.5 H966 M968 705.5 H977.5 V702.5"/>
      <path d="M987.5 700 V697.5 H991 M994.5 697.5 H1004.5 M1008 697.5 H1011.5 V700 M987.5 703 V705.5 H991 M994.5 705.5 H1004.5 M1008 705.5 H1011.5 V703"/>
    </g>
  </svg>
  <div class="abs" style="left:792px;top:717.5px;width:33.5px;height:17px;border:1px solid #595959;background:#585858;border-radius:1px"></div>
  <span class="lbl" style="left:792px;width:33.5px;text-align:center;top:721px;font-size:10px;color:#686868">0 pt</span>
  <span class="lbl" style="left:792px;width:33.5px;text-align:center;top:736px;font-size:10.4px;color:#8a8a8a">線分</span>
  <div class="abs" style="left:829px;top:717.5px;width:35px;height:17px;border:1px solid #595959;background:#585858;border-radius:1px"></div>
  <span class="lbl" style="left:829px;width:35px;text-align:center;top:721px;font-size:10px;color:#686868">0 pt</span>
  <span class="lbl" style="left:829px;width:35px;text-align:center;top:736px;font-size:10.4px;color:#8a8a8a">間隔</span>
  <div class="abs" style="left:867.5px;top:717.5px;width:33.5px;height:17px;border:1px solid #595959;background:#585858;border-radius:1px"></div>
  <span class="lbl" style="left:867.5px;width:33.5px;text-align:center;top:721px;font-size:10px;color:#686868">0 pt</span>
  <span class="lbl" style="left:867.5px;width:33.5px;text-align:center;top:736px;font-size:10.4px;color:#8a8a8a">線分</span>
  <div class="abs" style="left:905px;top:717.5px;width:34px;height:17px;border:1px solid #595959;background:#585858;border-radius:1px"></div>
  <span class="lbl" style="left:905px;width:34px;text-align:center;top:721px;font-size:10px;color:#686868">0 pt</span>
  <span class="lbl" style="left:905px;width:34px;text-align:center;top:736px;font-size:10.4px;color:#8a8a8a">間隔</span>
  <div class="abs" style="left:943px;top:717.5px;width:34px;height:17px;border:1px solid #595959;background:#585858;border-radius:1px"></div>
  <span class="lbl" style="left:943px;width:34px;text-align:center;top:721px;font-size:10px;color:#686868">0 pt</span>
  <span class="lbl" style="left:943px;width:34px;text-align:center;top:736px;font-size:10.4px;color:#8a8a8a">線分</span>
  <div class="abs" style="left:981px;top:717.5px;width:34px;height:17px;border:1px solid #595959;background:#585858;border-radius:1px"></div>
  <span class="lbl" style="left:981px;width:34px;text-align:center;top:721px;font-size:10px;color:#686868">0 pt</span>
  <span class="lbl" style="left:981px;width:34px;text-align:center;top:736px;font-size:10.4px;color:#8a8a8a">間隔</span>
</div></div>
</div>

<svg id="artsvg" style="left:0;top:0;z-index:5" width="1024" height="743" viewBox="0 0 1024 743">
<path d="M208.7 300.7 H516.3 V479.4 H307.7 L297.6 492.8 L332.7 503.75 L279.6 551.4 L296 512.8 L262.9 504.2 L273.9 479.4 H208.7 Z" fill="#fff" stroke="#0a0208" stroke-width="5.2" stroke-miterlimit="10"/>
<path d="M208.7 300.7 H516.3 V479.4 H307.7 L297.6 492.8 L332.7 503.75 L279.6 551.4 L296 512.8 L262.9 504.2 L273.9 479.4 H208.7 Z" fill="none" stroke="#b766bd" stroke-width="1.3" stroke-miterlimit="10"/>
<rect x="206" y="298" width="313" height="264" fill="none" stroke="#cf86d6" stroke-width="1"/>
<path d="M206 299.3 H519" fill="none" stroke="#a956ab" stroke-width="2.9"/><path d="M207.3 298 V481.5" fill="none" stroke="#7c427f" stroke-width="2.6"/>
<path d="M517.8 298 V481.5" fill="none" stroke="#84468a" stroke-width="2.4"/>
<rect x="203.2" y="295.5" width="5" height="5" fill="#fff" stroke="#c468cc" stroke-width="1"/><rect x="360.0" y="295.5" width="5" height="5" fill="#fff" stroke="#c468cc" stroke-width="1"/><rect x="516.5" y="295.5" width="5" height="5" fill="#fff" stroke="#c468cc" stroke-width="1"/>
<rect x="203.2" y="427.5" width="5" height="5" fill="#fff" stroke="#c468cc" stroke-width="1"/><rect x="516.5" y="427.5" width="5" height="5" fill="#fff" stroke="#c468cc" stroke-width="1"/>
<rect x="203.2" y="559.5" width="5" height="5" fill="#fff" stroke="#c468cc" stroke-width="1"/><rect x="360.0" y="559.5" width="5" height="5" fill="#fff" stroke="#c468cc" stroke-width="1"/><rect x="516.5" y="559.5" width="5" height="5" fill="#fff" stroke="#c468cc" stroke-width="1"/>
</svg>
<div id="taskbar" class="abs" style="left:82px;top:584px;width:470px;height:32px;background:#4f4f4f;border-radius:5px;z-index:6;box-shadow:0 1px 3px rgba(0,0,0,.25)">
  <div class="abs" style="left:5.5px;top:4.5px;width:3.5px;height:23.5px;border-radius:1.5px;background:#8c8c8c"></div>
  <div class="abs" style="left:18px;top:4px;width:211px;height:24.5px;border:1px solid #6b6b6b;border-radius:3px"></div>
  <svg style="left:25px;top:8px" width="16" height="16" viewBox="0 0 16 16"><path d="M1.2 4.4 H3.6 M1.2 4.4 V6.8 M1.2 11.2 V13.6 H3.6 M10.6 13.6 H13.2 V11.2" fill="none" stroke="#d8d8d8" stroke-width="1.1"/><rect x="3.4" y="5.6" width="8" height="6.6" fill="#8f8f8f" stroke="#d8d8d8" stroke-width="0.9"/><path d="M5 11 L7.4 8 L9 10 L10 9 L11 11 Z" fill="#d8d8d8"/><path d="M12.2 1 L12.9 3 L14.9 3.7 L12.9 4.4 L12.2 6.4 L11.5 4.4 L9.5 3.7 L11.5 3 Z" fill="#e4e4e4"/></svg>
  <span class="lbl" style="left:45px;top:10.6px;font-size:11.3px;font-weight:700;letter-spacing:.2px;color:#f0f0f0">生成塗りつぶし (シェイプ) (Beta)</span>
  <div class="abs" style="left:232px;top:4px;width:93.5px;height:24.5px;border:1px solid #6b6b6b;border-radius:3px"></div>
  <svg style="left:240px;top:8px" width="16" height="16" viewBox="0 0 16 16"><path d="M6 3.6 L14.4 11.4 L9.8 11.8 L6 15.4 Z" fill="#d8d8d8"/><path d="M0.6 11 C1.6 8 3.4 5.6 5.6 3.6 M6 3 C7.6 1.6 9.4 1 11 1.2 M11.4 1.4 L13.6 3.6" fill="none" stroke="#d0d0d0" stroke-width="0.9"/><circle cx="5.8" cy="3.4" r="1.3" fill="#d8d8d8"/><circle cx="11" cy="1.4" r="1.1" fill="#d8d8d8"/><circle cx="13.4" cy="3.8" r="0.8" fill="#d8d8d8"/></svg>
  <span class="lbl" style="left:260px;top:10.6px;font-size:11.3px;font-weight:700;color:#f0f0f0">パスを編集</span>
  <div class="abs" style="left:335px;top:8.5px;width:15px;height:15px;background:#fff;border:1px solid #666"></div>
  <div class="abs" style="left:358px;top:9.9px;width:15px;height:2.6px;background:#cfcfcf"></div>
  <div class="abs" style="left:358px;top:14.2px;width:15px;height:2.6px;background:#cfcfcf"></div>
  <div class="abs" style="left:358px;top:18.5px;width:15px;height:2.6px;background:#cfcfcf"></div>
  <svg style="left:385px;top:8px" width="14" height="16" viewBox="0 0 14 16"><path d="M3.6 7 V4.6 C3.6 0.8 10.4 0.8 10.4 4.6 V7" fill="none" stroke="#cfcfcf" stroke-width="1.7"/><rect x="1.6" y="6.6" width="10.8" height="7.8" rx="0.8" fill="#cfcfcf"/><rect x="6.2" y="9" width="1.6" height="3" fill="#4f4f4f"/></svg>
  <div class="abs" style="left:412.40000000000003px;top:14.4px;width:3.4px;height:3.4px;border-radius:50%;background:#c2c2c2"></div>
  <div class="abs" style="left:418.00000000000006px;top:14.4px;width:3.4px;height:3.4px;border-radius:50%;background:#c2c2c2"></div>
  <div class="abs" style="left:423.6px;top:14.4px;width:3.4px;height:3.4px;border-radius:50%;background:#c2c2c2"></div>
</div>

<div id="dlg" class="abs" style="left:511.5px;top:321px;width:295px;height:299px;border-radius:8px;background:#535353;z-index:20;box-shadow:0 0 0 0.6px rgba(20,20,20,.8),0 16px 38px rgba(0,0,0,.55),0 3px 14px rgba(0,0,0,.38);overflow:hidden">
  <div class="abs" style="left:0;top:0;width:295px;height:27px;background:#434444;border-bottom:1px solid #2f2f2f"></div>
  <span class="lbl" style="left:0;width:295px;text-align:center;top:8.6px;font-size:10.45px;font-weight:700;color:#d2d2d2">パスの自由変形</span>
  <div class="abs" style="left:13.5px;top:45px;width:268.5px;height:185px;background:#fff;border:1px solid #262626"></div>
  <div class="abs" style="left:13.25px;top:249.75px;width:82px;height:23px;border:1px solid #d4d4d4;border-radius:12px"></div>
  <span class="lbl" style="left:13.25px;width:82px;text-align:center;top:255.5px;font-size:11.3px;font-weight:700;color:#f4f4f4">リセット</span>
  <div class="abs" style="left:114.5px;top:249.75px;width:82px;height:23px;border:1px solid #d4d4d4;border-radius:12px"></div>
  <span class="lbl" style="left:114.5px;width:82px;text-align:center;top:255.5px;font-size:11.3px;font-weight:700;color:#f4f4f4">キャンセル</span>
  <div class="abs" style="left:200.75px;top:249.75px;width:82px;height:23px;background:#3b97f0;border-radius:12px"></div>
  <span class="lbl" style="left:200.75px;width:82px;text-align:center;top:255px;font-size:12.3px;font-weight:400;color:#fff;text-shadow:0 0 .4px #fff">OK</span>
</div>
<svg style="left:0;top:0;z-index:21" width="1024" height="743" viewBox="0 0 1024 743">
<path d="M604 408 H722" fill="none" stroke="#8a8a8a" stroke-width="0.8" stroke-dasharray="1 1.6"/>
<path d="M597.5 420.75 L724.5 403 L694.5 504.25 L597.5 491.75 Z" fill="none" stroke="#111" stroke-width="0.8"/>
<path d="M597.5 471.25 L619.25 471.5 L615.5 479.25 L625.5 483 L620 494.25 L638.75 480 L628.75 477.5 L632.5 472 L702.5 475" fill="none" stroke="#111" stroke-width="0.8"/>
<circle cx="597" cy="419.5" r="12.6" fill="none" stroke="#ea7371" stroke-width="4.2"/><circle cx="723.75" cy="403" r="12.6" fill="none" stroke="#ea7371" stroke-width="4.2"/><circle cx="597.5" cy="491.25" r="12.6" fill="none" stroke="#ea7371" stroke-width="4.2"/><circle cx="695.25" cy="504.25" r="12.6" fill="none" stroke="#ea7371" stroke-width="4.2"/>
<rect x="595.9" y="419.15" width="3.2" height="3.2" fill="#000"/><rect x="722.9" y="401.4" width="3.2" height="3.2" fill="#000"/><rect x="595.9" y="490.15" width="3.2" height="3.2" fill="#000"/><rect x="692.9" y="502.65" width="3.2" height="3.2" fill="#000"/>
</svg>
</body>
</html>
